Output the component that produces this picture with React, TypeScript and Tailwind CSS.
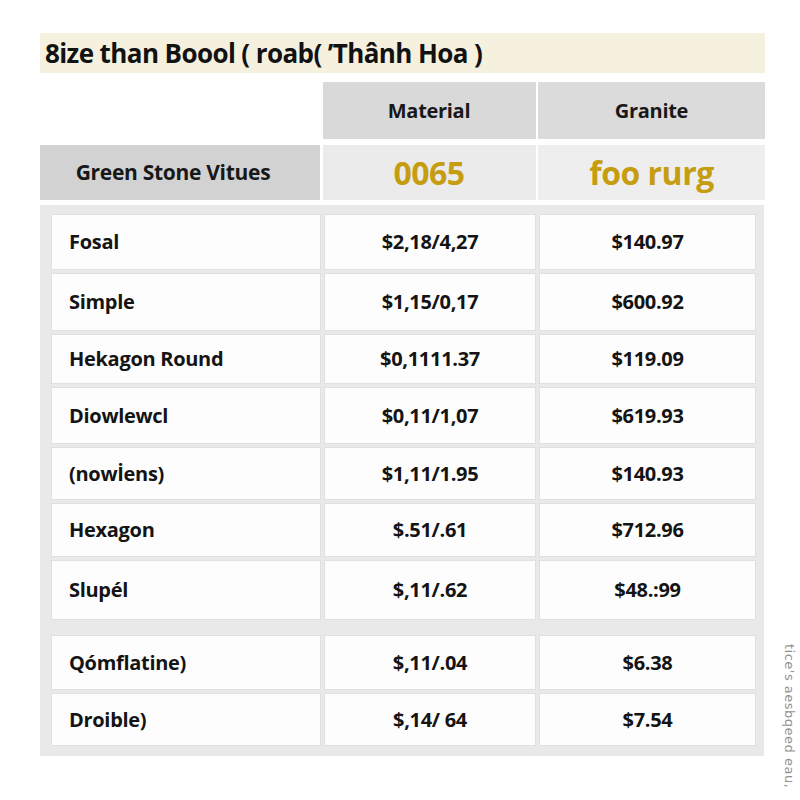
import React from 'react';

const rows: { name: string; a: string; b: string; h: string }[] = [
    { name: 'Fosal', a: '$2,18/4,27', b: '$140.97', h: 'h-[56px]' },
    { name: 'Simple', a: '$1,15/0,17', b: '$600.92', h: 'h-[58px]' },
    { name: 'Hekagon Round', a: '$0,1111.37', b: '$119.09', h: 'h-[50px]' },
    { name: 'Diowlewcl', a: '$0,11/1,07', b: '$619.93', h: 'h-[57px]' },
    { name: '(nowİens)', a: '$1,11/1.95', b: '$140.93', h: 'h-[53px]' },
    { name: 'Hexagon', a: '$.51/.61', b: '$712.96', h: 'h-[54px]' },
    { name: 'Slupél', a: '$,11/.62', b: '$48.:99', h: 'h-[60px]' },
];

const lower = [
    { name: 'Qómflatine)', a: '$,11/.04', b: '$6.38', h: 'h-[55px]' },
    { name: 'Droible)', a: '$,14/ 64', b: '$7.54', h: 'h-[53px]' },
];

function Row({ name, a, b, h }: { name: string; a: string; b: string; h: string }) {
    return (
        <div className={`grid grid-cols-[270px_212px_217px] gap-x-[3px] ${h}`}>
            <div className="bg-[#fdfdfd] border border-[#e0e0e0] flex items-center pl-[17px] text-[20px] font-bold tracking-[-0.3px] text-[#141414]">
                {name}
            </div>
            <div className="bg-[#fdfdfd] border border-[#e0e0e0] flex items-center justify-center text-[20px] font-bold tracking-[-0.3px] text-[#141414]">
                {a}
            </div>
            <div className="bg-[#fdfdfd] border border-[#e0e0e0] flex items-center justify-center text-[20px] font-bold tracking-[-0.3px] text-[#141414]">
                {b}
            </div>
        </div>
    );
}

export default function App() {
    return (
        <div className="w-[800px] h-[800px] bg-white relative pt-[33px] pl-[40px] font-['Open_Sans',sans-serif]">
            <div className="w-[725px] h-[40px] bg-[#f6f1df] flex items-center pl-[5px] text-[26px] font-bold tracking-[-0.6px] text-[#121212]">
                8ize than Boool ( roab( ’Thânh Hoa )
            </div>

            <div className="mt-[9px] grid grid-cols-[280px_213px_227px] gap-x-[2.5px]">
                <div />
                <div className="h-[57px] bg-[#d9d9d9] flex items-center justify-center text-[20px] font-bold tracking-[-0.3px] text-[#181818]">
                    Material
                </div>
                <div className="h-[57px] bg-[#dbdbdb] flex items-center justify-center text-[20px] font-bold tracking-[-0.3px] text-[#181818]">
                    Granite
                </div>
            </div>

            <div className="mt-[6px] grid grid-cols-[280px_213px_227px] gap-x-[2.5px]">
                <div className="h-[55px] bg-[#d2d2d2] flex items-center justify-center pr-[14px] text-[21px] font-bold tracking-[-0.3px] text-[#181818]">
                    Green Stone Vitues
                </div>
                <div className="h-[55px] bg-[#ebebeb] flex items-center justify-center text-[32px] font-bold tracking-[-0.5px] text-[#c69d10]">
                    0065
                </div>
                <div className="h-[55px] bg-[#eeeeee] flex items-center justify-center text-[32px] font-bold tracking-[-0.5px] text-[#c69d10]">
                    foo rurg
                </div>
            </div>

            <div className="mt-[5px] w-[724px] bg-[#e9e9e9] pt-[9px] pb-[10px] pl-[11px] flex flex-col">
                <div className="flex flex-col gap-y-[3px]">
                    {rows.map((r) => (
                        <Row key={r.name} {...r} />
                    ))}
                </div>
                <div className="mt-[15px] flex flex-col gap-y-[3px]">
                    {lower.map((r) => (
                        <Row key={r.name} {...r} />
                    ))}
                </div>
            </div>

            <div className="absolute left-[779px] top-[644px] [writing-mode:vertical-rl] text-[13px] text-[#909090] font-['DejaVu_Sans',sans-serif] tracking-[0.5px]">
                tice's aesbqeed eau,
            </div>
        </div>
    );
}
